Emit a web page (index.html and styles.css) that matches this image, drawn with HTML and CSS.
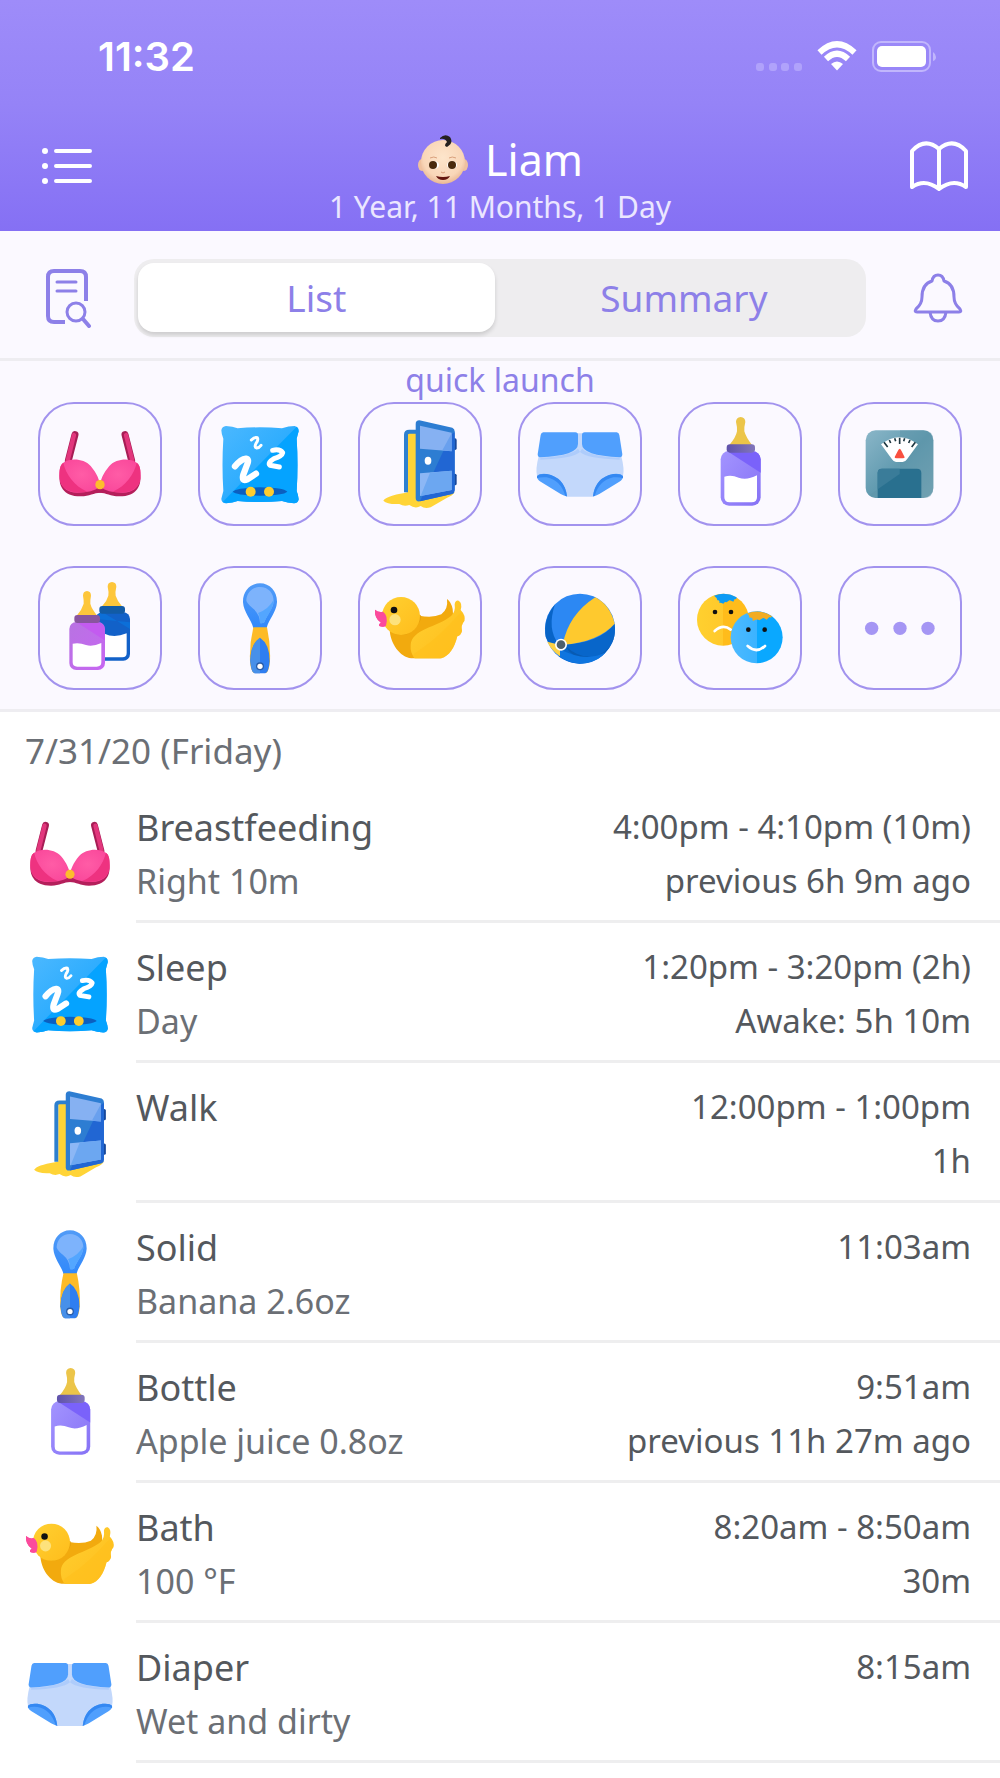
FILE: index.html
```html
<!DOCTYPE html>
<html lang="en">
<head>
<meta charset="utf-8">
<meta name="viewport" content="width=device-width, initial-scale=1">
<title>Liam – Baby Tracker</title>
<link rel="stylesheet" href="styles.css">
</head>
<body>
<svg class="sprite" aria-hidden="true">
  <defs>
    <linearGradient id="g-pillow" x1="0" y1="0" x2="1" y2="1"><stop offset="0" stop-color="#4bb8ff"/><stop offset="1" stop-color="#12a2fd"/></linearGradient>
    <radialGradient id="g-cup" cx=".55" cy=".45" r=".6"><stop offset="0" stop-color="#ff5ca6"/><stop offset="1" stop-color="#f9479a"/></radialGradient>
    <linearGradient id="g-bottle" x1="0" y1="0" x2="1" y2="1"><stop offset="0" stop-color="#a394ff"/><stop offset="1" stop-color="#8672f5"/></linearGradient>
    <linearGradient id="g-bottle2" x1="0" y1="0" x2="1" y2="1"><stop offset="0" stop-color="#b873e2"/><stop offset="1" stop-color="#c766f2"/></linearGradient>
    <linearGradient id="g-cap" x1="0" y1="0" x2="1" y2="0"><stop offset="0" stop-color="#5f52ab"/><stop offset="1" stop-color="#8276bb"/></linearGradient>
    <linearGradient id="g-scale" x1="0" y1="0" x2="1" y2="1"><stop offset="0" stop-color="#8ab6c8"/><stop offset=".5" stop-color="#629bb0"/><stop offset="1" stop-color="#84adbb"/></linearGradient>
    <linearGradient id="g-spoon" x1="0" y1="0" x2="0" y2="1"><stop offset="0" stop-color="#519bf7"/><stop offset="1" stop-color="#3189fb"/></linearGradient>
    <linearGradient id="g-duck" x1="0" y1="0" x2="1" y2="1"><stop offset="0" stop-color="#ffd031"/><stop offset="1" stop-color="#ffbd1c"/></linearGradient>
    <linearGradient id="g-sad" x1="0" y1="0" x2="1" y2="0"><stop offset="0" stop-color="#ffd02f"/><stop offset=".5" stop-color="#ffc92b"/><stop offset=".5" stop-color="#ffbc1b"/></linearGradient>
    <linearGradient id="g-happy" x1="0" y1="0" x2="1" y2="0"><stop offset="0" stop-color="#4dbaff"/><stop offset=".5" stop-color="#3bb3ff"/><stop offset=".5" stop-color="#0aa8ff"/></linearGradient>
    <radialGradient id="g-skin" cx=".5" cy=".4" r=".6"><stop offset="0" stop-color="#fde5cb"/><stop offset=".75" stop-color="#f9d6b8"/><stop offset="1" stop-color="#e9b794"/></radialGradient>
  </defs>

  <symbol id="i-bra" viewBox="100 68 276 276" overflow="visible">
    <g id="bra-half">
      <path d="M163 118 143 196" stroke="#a71d55" stroke-width="21" stroke-linecap="round"/>
      <path d="M160 119 141 196" stroke="#e2367c" stroke-width="13" stroke-linecap="round"/>
      <path d="M118 235C112 268 126 303 180 303C208 303 218 292 240 292V262Z" fill="#b41f5b"/>
      <path d="M128 202C150 187 190 190 210 212C228 233 238 256 238 272C224 288 200 291 170 292C140 292 120 275 117 250C115 225 118 208 128 202Z" fill="url(#g-cup)"/>
      <path d="M128 202C135 235 160 272 200 289C150 298 120 280 117 250C115 225 118 208 128 202Z" fill="#ee3280"/>
    </g>
    <use href="#bra-half" transform="matrix(-1 0 0 1 476 0)"/>
    <circle cx="238" cy="268" r="14" fill="#fdbd2c"/>
  </symbol>

  <symbol id="i-pillow" viewBox="584 68 276 276" overflow="visible">
    <path id="pillow-shape" d="M620 92Q640 93 655 99Q722 93 788 99Q808 92 826 92Q838 95 838 108Q834 122 832 130Q837 208 832 287Q837 300 838 312Q836 324 824 324Q805 323 788 317Q722 323 655 317Q640 323 620 324Q606 322 606 310Q610 295 612 287Q607 208 612 130Q606 115 606 105Q608 93 620 92Z" fill="url(#g-pillow)"/>
    <path d="M832 94Q838 98 838 108Q834 122 832 130Q837 208 832 287Q837 300 838 312Q836 324 824 324Q805 323 788 317Q722 323 655 317Q640 323 620 324L610 320Z" fill="#05a3ff"/>
    <g fill="none" stroke="#fff" stroke-linecap="round" stroke-linejoin="round">
      <path d="M647 213Q664 192 680 190Q690 192 684 206L672 238Q666 260 684 252L710 235" stroke-width="19"/>
      <path d="M760 165Q782 160 790 172Q788 182 764 190Q744 202 752 210L780 215" stroke-width="15"/>
      <path d="M696 134Q706 124 714 127Q718 134 710 144Q704 156 712 158Q720 157 725 150" stroke-width="9"/>
    </g>
    <path d="M640 289Q652 277 722 276Q792 277 804 289Q792 300 722 301Q652 300 640 289Z" fill="#0b5fc0"/>
    <circle cx="694" cy="289" r="15" fill="#fdcd2f"/><circle cx="749" cy="289" r="15" fill="#fdcd2f"/>
  </symbol>

  <symbol id="i-door" viewBox="100 68 276 276" overflow="visible">
    <path d="M128 316Q136 302 192 293L202 290V112H228V290L342 290Q338 300 318 308L270 336Q252 342 240 332Q224 342 206 329Q190 335 176 326Q140 328 128 316Z" fill="#ffd437"/>
    <path d="M196 291V118Q196 109 206 109H230" fill="none" stroke="#2e80cf" stroke-width="12"/>
    <rect x="332" y="129" width="16" height="35" rx="5" fill="#17489b"/><rect x="332" y="235" width="16" height="35" rx="5" fill="#17489b"/>
    <path d="M236 75 335 97Q342 100 342 108V284Q342 293 334 296L238 318Q225 320 225 308V86Q225 75 236 75Z" fill="#2d7dd2"/>
    <path d="M342 110V284Q342 293 334 296L238 318 330 120Z" fill="#2166d3"/>
    <path d="M238 91 333 112V168L238 160Z" fill="#86b1f2"/><path d="M333 114V168L305 165Z" fill="#69a0ee"/>
    <path d="M238 234 333 226V284L238 302Z" fill="#8cb7f5"/><path d="M268 232 333 226V284L240 302Z" fill="#6ca7f1"/>
    <ellipse cx="262" cy="196" rx="10" ry="12" fill="#fff"/>
  </symbol>

  <symbol id="i-diaper" viewBox="584 68 276 276" overflow="visible">
    <path d="M606 114 598 183Q588 222 593 241Q600 254 682 304H763Q845 254 851 241Q856 222 846 183L838 114Z" fill="#c3d8fb"/>
    <g id="diaper-side">
      <path d="M603 187Q690 184 716 160L722 170Q700 190 603 193Z" fill="#aeccfb"/>
      <path d="M612 111H708Q716 111 716 119V146Q716 181 601 186Q594 184 595 177L604 119Q606 111 612 111Z" fill="#509ffd"/>
      <path d="M593 242Q600 234 622 236Q676 246 683 303Q674 302 664 296L604 259Q592 252 593 242Z" fill="#509ffd"/>
      <path d="M593 243Q600 234 622 236Q676 246 683 303L678 302Q664 254 622 246Q604 244 593 249Z" fill="#3488f2"/>
    </g>
    <use href="#diaper-side" transform="matrix(-1 0 0 1 1444 0)"/>
  </symbol>

  <symbol id="i-bottle" viewBox="100 68 276 276" overflow="visible">
    <path d="M240 65Q254 66 254 80Q250 95 251 108Q256 126 274 149H206Q226 126 229 108Q230 95 226 80Q226 66 240 65Z" fill="#ecc549"/>
    <rect x="180" y="167" width="120" height="164" rx="25" fill="url(#g-bottle)"/>
    <path d="M205 171 300 232V192Q298 170 275 167H205Z" fill="#7a62fa"/>
    <rect x="198" y="147" width="85" height="25" rx="10" fill="url(#g-cap)"/>
    <path d="M191 244Q212 237 234 247Q258 256 289 240V306Q289 321 273 321H207Q191 321 191 306Z" fill="#fff"/>
  </symbol>

  <symbol id="i-scale" viewBox="584 68 276 276" overflow="visible">
    <rect x="619" y="105" width="203" height="203" rx="30" fill="url(#g-scale)"/>
    <path d="M722 105H792Q822 105 822 135V278Q822 308 792 308H649Q636 306 629 300L722 235Z" fill="#5c93a7" opacity=".45"/>
    <path d="M655 308V233Q655 220 668 220H773Q786 220 786 233V308Z" fill="#29708f"/>
    <path d="M655 282V233Q655 220 668 220H721V236Z" fill="#3a7c99"/>
    <path d="M665 147Q720 104 776 147L743 192Q738 200 730 200H710Q703 200 698 192Z" fill="#fff"/>
    <path d="M721 127V146M706 129 709 138M736 129 733 138M690 134 694 143M752 134 748 143M674 141 685 155M768 141 757 155" stroke="#1d3640" stroke-width="5"/>
    <path d="M721 160Q724 160 727 168L736 186Q736 189 730 189H712Q705 189 706 185L715 168Q718 160 721 160Z" fill="#f9503f"/>
  </symbol>

  <symbol id="i-bottles" viewBox="100 559 276 276" overflow="visible">
    <path d="M274 559Q287 560 287 573Q283 590 285 600Q290 616 304 632H244Q259 616 263 600Q265 590 261 573Q261 560 274 559Z" fill="#fdc63b"/>
    <rect x="226" y="650" width="102" height="145" rx="20" fill="#1261c8"/>
    <path d="M226 670V660Q236 650 246 650L328 700V680Z" fill="#0c6fd8"/>
    <rect x="236" y="631" width="77" height="23" rx="9" fill="#125ba5"/>
    <path d="M252 714Q280 728 318 713V772Q318 785 305 785H252Z" fill="#fff"/>
    <path d="M199 586Q211 587 211 600Q208 616 209 624Q213 640 230 660H168Q184 642 189 624Q190 616 187 600Q187 587 199 586Z" fill="#fdc63b"/>
    <rect x="146" y="679" width="107" height="144" rx="21" fill="url(#g-bottle2)"/>
    <path d="M168 680H232Q252 682 252 702V734Z" fill="#c35bf0"/>
    <rect x="161" y="658" width="77" height="24" rx="9" fill="#89559f"/>
    <path d="M156 744Q176 740 196 748Q216 754 242 742V800Q242 813 228 813H170Q156 813 156 800Z" fill="#fff"/>
  </symbol>

  <symbol id="i-spoon" viewBox="584 559 276 276" overflow="visible">
    <path d="M722 563C752 563 774 588 773 620C771 650 748 672 742 697H702C696 672 673 650 671 620C670 588 692 563 722 563Z" fill="url(#g-spoon)"/>
    <path d="M722 574C748 574 764 594 763 618C760 642 742 658 735 680Q728 684 722 682Q722 656 700 638C686 626 681 618 681 614C682 592 698 574 722 574Z" fill="#7db3fc"/>
    <path d="M763 612C762 642 742 658 735 680Q728 684 722 682Q722 662 716 652Q748 640 763 612Z" fill="#53a6ff"/>
    <path d="M702 695H743Q754 745 752 796Q749 828 740 832H704Q694 826 692 796Q690 745 702 695Z" fill="#fdbb27"/>
    <path d="M722 726Q751 745 751 796Q748 832 738 833H706Q696 832 693 796Q694 745 722 726Z" fill="#2f7ef0"/>
    <path d="M722 726V833H706Q696 832 693 796Q694 745 722 726Z" fill="#4790e9"/>
    <circle cx="722" cy="812" r="12" fill="#2a5da8"/><circle cx="722" cy="812" r="8" fill="#fff"/>
  </symbol>

  <symbol id="i-duck" viewBox="100 559 276 276" overflow="visible">
    <path d="M147 700C148 744 178 784 212 788H300L340 700 336 640Q332 620 319 610Q323 640 302 656Q275 668 236 660L220 690Z" fill="#f2aa0e"/>
    <path d="M210 748C212 700 290 695 332 660Q345 648 342 626Q344 613 354 615Q366 622 360 643Q376 660 371 676Q360 688 364 706Q360 720 350 722C342 756 325 782 302 788H222Q208 772 210 748Z" fill="url(#g-duck)"/>
    <path d="M350 660Q300 720 232 766Q216 776 216 782L222 788H302C325 782 342 756 350 722Q360 720 364 706Q360 688 371 676Q372 664 362 650Z" fill="#ffbf1c" opacity=".6"/>
    <path d="M149 708Q205 740 240 672V658L180 650Z" fill="#e49e0b"/>
    <path d="M103 642Q114 652 127 648Q144 660 136 690Q128 696 116 691Q113 685 121 681Q101 668 103 642Z" fill="#fb4a9c"/>
    <circle cx="181" cy="661" r="57" fill="url(#g-duck)"/>
    <path d="M103 642Q114 652 127 648Q144 660 136 690Q128 696 116 691Q113 685 121 681Q101 668 103 642Z" fill="#fb4a9c"/>
    <circle cx="163" cy="672" r="17" fill="#fde27c"/>
    <circle cx="160" cy="643" r="10" fill="#111"/>
  </symbol>

  <symbol id="i-ball" viewBox="584 559 276 276" overflow="visible">
    <circle cx="722" cy="699" r="105" fill="#2c88f3"/>
    <path d="M647 626Q610 672 619 724L628 742 658 746Q622 700 647 626Z" fill="#0864c7"/>
    <path d="M826 684Q780 742 672 747L658 782Q720 826 786 782Q834 742 826 684Z" fill="#0866ca"/>
    <path d="M680 752Q724 796 788 780Q828 744 826 700Q830 770 740 792Q690 780 680 752Z" fill="#085bb3"/>
    <path d="M660 782Q690 806 740 803Q780 796 798 770Q740 802 660 760Z" fill="#0f75df"/>
    <path d="M768 605Q812 628 826 684Q776 740 670 747Q688 656 768 605Z" fill="#fec92e"/>
    <path d="M624 738 662 748V782Q634 762 624 738Z" fill="#fdd145"/>
    <circle cx="665" cy="747" r="18" fill="#fff"/><circle cx="665" cy="747" r="13" fill="#4e5f6c"/>
  </symbol>

  <symbol id="i-moods" viewBox="100 559 276 276" overflow="visible">
    <circle cx="187" cy="672" r="78" fill="url(#g-sad)"/>
    <path d="M160 600Q195 587 228 605Q228 612 222 610L218 618Q208 612 206 614L198 620Q192 616 188 624Q178 620 176 622Q178 612 170 614Q170 606 160 600Z" fill="#0d9bf5"/>
    <circle cx="163" cy="649" r="7" fill="#111"/><circle cx="211" cy="649" r="7" fill="#111"/>
    <path d="M162 706Q187 684 210 702" fill="none" stroke="#fff" stroke-width="8" stroke-linecap="round"/>
    <circle cx="288" cy="725" r="78" fill="url(#g-happy)"/>
    <path d="M258 654Q296 638 334 662Q330 668 326 664L318 672Q308 664 306 668L296 674Q290 668 276 676Q278 664 266 666Q266 656 258 654Z" fill="#f2ac22"/>
    <circle cx="263" cy="702" r="7" fill="#111"/><circle cx="312" cy="702" r="7" fill="#111"/>
    <path d="M261 751Q288 775 313 751" fill="none" stroke="#fff" stroke-width="8" stroke-linecap="round"/>
  </symbol>

  <symbol id="i-more" viewBox="584 559 276 276" overflow="visible">
    <g fill="#a596f4"><circle cx="637" cy="698" r="20"/><circle cx="722" cy="698" r="20"/><circle cx="806" cy="698" r="20"/></g>
  </symbol>
</svg>

<header class="header">
  <div class="status">
    <time class="clock">11:32</time>
    <div class="status-icons">
      <svg width="46" height="32" viewBox="0 0 46 32" fill="#b0a2fb" aria-hidden="true"><rect x="0" y="22" width="8" height="8" rx="3"/><rect x="13" y="22" width="8" height="8" rx="3"/><rect x="25" y="22" width="8" height="8" rx="3"/><rect x="38" y="22" width="8" height="8" rx="3"/></svg>
      <svg width="40" height="32" viewBox="0 0 40 32" fill="none" stroke="#fff" aria-hidden="true"><path d="M2.500 11.500Q20-5 37.500 11.500" stroke-width="6"/><path d="M9 18Q20 7.500 31 18" stroke-width="6"/><path d="M14 23Q20 18 26 23L20 29.500Z" fill="#fff" stroke="none"/></svg>
      <svg width="64" height="32" viewBox="0 0 64 32" aria-hidden="true"><rect x="1" y="1" width="57" height="29" rx="8" fill="none" stroke="#c1b6fc" stroke-width="2"/><rect x="5" y="5" width="49" height="21" rx="5" fill="#fff"/><path d="M61 11Q64 13 64 16T61 20Z" fill="#c1b6fc"/></svg>
    </div>
  </div>
  <nav class="nav">
    <button class="icon-button icon-button-start" type="button" aria-label="Menu">
      <svg width="50" height="38" viewBox="0 0 50 38" fill="none" stroke="#fff" stroke-width="4" stroke-linecap="round"><path d="M14 4H48M14 19H48M14 34H48"/><g fill="#fff" stroke="none"><circle cx="3" cy="4" r="3"/><circle cx="3" cy="19" r="3"/><circle cx="3" cy="34" r="3"/></g></svg>
    </button>
    <div class="child">
      <h1 class="child-name">
        <svg width="52" height="52" viewBox="0 0 52 52" role="img" aria-label="Baby"><ellipse cx="5" cy="31" rx="4" ry="6" fill="#efc19f"/><ellipse cx="47" cy="31" rx="4" ry="6" fill="#efc19f"/><circle cx="26" cy="28" r="22" fill="url(#g-skin)"/><path d="M23 4Q28-1 33 3Q37 9 30 13Q26 12 30 8Q28 4 23 5Z" fill="#24201f"/><g fill="#fff"><ellipse cx="17" cy="31" rx="5" ry="4"/><ellipse cx="35" cy="31" rx="5" ry="4"/></g><g fill="#4a2a0d"><circle cx="16" cy="31" r="4"/><circle cx="35" cy="31" r="4"/></g><path d="M13 24Q17 22 20 24M32 24Q35 22 39 24M24 38Q26 40 28 38" fill="none" stroke="#d9a07c"/><path d="M19 42Q26 44 33 42Q31 46 26 46T19 42Z" fill="#64160f"/></svg>
        Liam
      </h1>
      <p class="child-age">1 Year, 11 Months, 1 Day</p>
    </div>
    <button class="icon-button icon-button-end" type="button" aria-label="Journal">
      <svg width="60" height="52" viewBox="0 0 60 52" fill="none" stroke="#fff" stroke-width="4" stroke-linejoin="round" stroke-linecap="round"><path d="M30 49Q16 38 3 47V11Q16-3 30 9Q44-3 57 11V47Q44 38 30 49V9"/></svg>
    </button>
  </nav>
</header>

<main>
  <div class="toolbar">
    <button class="tool" type="button" aria-label="Search records">
      <svg width="48" height="60" viewBox="0 0 48 60" fill="none" stroke="#8d80e8" stroke-width="4" stroke-linecap="round"><path d="M42 33V9Q42 3 36 3H10Q4 3 4 9V48Q4 54 10 54H21" stroke-linecap="butt"/><path d="M13 14H32M13 23H32" stroke-width="3"/><circle cx="32" cy="44" r="9" stroke-width="3"/><path d="M39 51 45 58"/></svg>
    </button>
    <div class="segmented">
      <button class="segment segment-active" type="button" aria-pressed="true">List</button>
      <button class="segment" type="button" aria-pressed="false">Summary</button>
    </div>
    <button class="tool" type="button" aria-label="Reminders">
      <svg width="56" height="50" viewBox="0 0 56 50" fill="none" stroke="#8d80e8" stroke-width="3" stroke-linejoin="round"><path d="M24 8Q25 2 30 2T36 8Q46 11 46 24Q46 31 52 36Q54 39 51 39H9Q6 39 8 36Q14 31 14 24Q14 11 24 8Z"/><path d="M22 39Q23 48 30 48T38 39"/></svg>
    </button>
  </div>

  <section class="quick">
    <h2 class="quick-title">quick launch</h2>
    <div class="tiles">
      <button class="tile" type="button" aria-label="Breastfeeding"><svg class="pic"><use href="#i-bra"/></svg></button>
      <button class="tile" type="button" aria-label="Sleep"><svg class="pic"><use href="#i-pillow"/></svg></button>
      <button class="tile" type="button" aria-label="Walk"><svg class="pic"><use href="#i-door"/></svg></button>
      <button class="tile" type="button" aria-label="Diaper"><svg class="pic"><use href="#i-diaper"/></svg></button>
      <button class="tile" type="button" aria-label="Bottle"><svg class="pic"><use href="#i-bottle"/></svg></button>
      <button class="tile" type="button" aria-label="Growth"><svg class="pic"><use href="#i-scale"/></svg></button>
      <button class="tile" type="button" aria-label="Pumping"><svg class="pic"><use href="#i-bottles"/></svg></button>
      <button class="tile" type="button" aria-label="Solid"><svg class="pic"><use href="#i-spoon"/></svg></button>
      <button class="tile" type="button" aria-label="Bath"><svg class="pic"><use href="#i-duck"/></svg></button>
      <button class="tile" type="button" aria-label="Play"><svg class="pic"><use href="#i-ball"/></svg></button>
      <button class="tile" type="button" aria-label="Mood"><svg class="pic"><use href="#i-moods"/></svg></button>
      <button class="tile" type="button" aria-label="More"><svg class="pic"><use href="#i-more"/></svg></button>
    </div>
  </section>

  <section class="log">
    <h2 class="log-date">7/31/20 (Friday)</h2>
    <ul class="entries">
      <li class="entry"><svg class="pic entry-pic"><use href="#i-bra"/></svg>
        <div class="entry-body"><div class="entry-main"><h3 class="entry-title">Breastfeeding</h3><p class="entry-note">Right 10m</p></div><div class="entry-time"><p>4:00pm - 4:10pm (10m)</p><p>previous 6h 9m ago</p></div></div></li>
      <li class="entry"><svg class="pic entry-pic"><use href="#i-pillow"/></svg>
        <div class="entry-body"><div class="entry-main"><h3 class="entry-title">Sleep</h3><p class="entry-note">Day</p></div><div class="entry-time"><p>1:20pm - 3:20pm (2h)</p><p>Awake: 5h 10m</p></div></div></li>
      <li class="entry"><svg class="pic entry-pic"><use href="#i-door"/></svg>
        <div class="entry-body"><div class="entry-main"><h3 class="entry-title">Walk</h3></div><div class="entry-time"><p>12:00pm - 1:00pm</p><p>1h</p></div></div></li>
      <li class="entry"><svg class="pic entry-pic"><use href="#i-spoon"/></svg>
        <div class="entry-body"><div class="entry-main"><h3 class="entry-title">Solid</h3><p class="entry-note">Banana 2.6oz</p></div><div class="entry-time"><p>11:03am</p></div></div></li>
      <li class="entry"><svg class="pic entry-pic"><use href="#i-bottle"/></svg>
        <div class="entry-body"><div class="entry-main"><h3 class="entry-title">Bottle</h3><p class="entry-note">Apple juice 0.8oz</p></div><div class="entry-time"><p>9:51am</p><p>previous 11h 27m ago</p></div></div></li>
      <li class="entry"><svg class="pic entry-pic"><use href="#i-duck"/></svg>
        <div class="entry-body"><div class="entry-main"><h3 class="entry-title">Bath</h3><p class="entry-note">100 °F</p></div><div class="entry-time"><p>8:20am - 8:50am</p><p>30m</p></div></div></li>
      <li class="entry"><svg class="pic entry-pic"><use href="#i-diaper"/></svg>
        <div class="entry-body"><div class="entry-main"><h3 class="entry-title">Diaper</h3><p class="entry-note">Wet and dirty</p></div><div class="entry-time"><p>8:15am</p></div></div></li>
    </ul>
  </section>
</main>
</body>
</html>
```
FILE: styles.css
```css
* {
  box-sizing: border-box;
}

body {
  margin: 0;
  background: #fff;
  color: #54585d;
  font-family: "Noto Sans", "Open Sans", sans-serif;
}

h1, h2, h3, p, ul {
  margin: 0;
  padding: 0;
  font-weight: 400;
  list-style: none;
}

button {
  padding: 0;
  border: 0;
  background: none;
  color: inherit;
  font: inherit;
  cursor: pointer;
}

svg {
  display: block;
  flex: none;
}

.sprite {
  position: absolute;
  width: 0;
  height: 0;
}

/* Header */
.header {
  padding-bottom: 4px;
  background: linear-gradient(#9e8cf9, #9583f7 45%, #8570f4);
  color: #fff;
}

.status {
  display: flex;
  align-items: center;
  justify-content: space-between;
  height: 113px;
  padding: 0 64px 0 98px;
}

.clock {
  font-family: Inter, sans-serif;
  font-size: 40px;
  font-weight: 600;
}

.status-icons {
  display: flex;
  gap: 15px;
}

.nav {
  display: grid;
  grid-template-columns: 1fr auto 1fr;
  align-items: start;
  padding: 20px 31px 0;
}

.icon-button {
  display: flex;
  align-items: center;
  height: 66px;
}

.icon-button-start {
  justify-self: start;
  padding-left: 11px;
}

.icon-button-end {
  justify-self: end;
}

.child {
  text-align: center;
}

.child-name {
  display: flex;
  align-items: center;
  justify-content: center;
  gap: 16px;
  font-size: 43px;
  line-height: 54px;
}

.child-age {
  color: #ebe6ff;
  font-size: 30px;
  line-height: 40px;
}

/* View switch */
.toolbar {
  display: flex;
  align-items: center;
  gap: 42px;
  height: 130px;
  padding: 7px 36px 0 44px;
  border-bottom: 3px solid #eeedf1;
  background: #fbf9ff;
}

.segmented {
  display: flex;
  flex: 1;
  gap: 7px;
  height: 78px;
  padding: 4px 0 5px 4px;
  border-radius: 20px;
  background: #eeedef;
}

.segment {
  flex: 1;
  border-radius: 16px;
  color: #8d80e8;
  font-size: 37px;
}

.segment-active {
  flex: 0 0 49%;
  background: #fff;
  box-shadow: 0 3px 4px rgba(0, 0, 0, .14);
}

/* Quick launch */
.quick {
  padding: 0 38px 19px;
  border-bottom: 3px solid #eeedf1;
  background: #fbf9ff;
}

.quick-title {
  margin-bottom: 3px;
  color: #8d80e8;
  font-size: 32px;
  line-height: 38px;
  text-align: center;
}

.tiles {
  display: grid;
  grid-template-columns: repeat(6, 124px);
  justify-content: space-between;
  row-gap: 40px;
}

.tile {
  display: flex;
  align-items: center;
  justify-content: center;
  height: 124px;
  border: 2px solid #a293ee;
  border-radius: 36px;
}

.pic {
  width: 92px;
  height: 92px;
  overflow: visible;
}

/* Log */
.log-date {
  padding: 7px 25px 0;
  color: #6b6f75;
  font-size: 35px;
  line-height: 64px;
}

.entry {
  display: grid;
  grid-template-columns: 90px 1fr;
  column-gap: 21px;
  align-items: center;
  padding-left: 25px;
}

.entry-pic {
  width: 90px;
  height: 90px;
  margin-top: 2px;
}

.entry-body {
  display: flex;
  justify-content: space-between;
  min-height: 140px;
  padding: 18px 29px 13px 0;
  border-bottom: 3px solid #eeeeef;
}

.entry-title {
  font-size: 36px;
  line-height: 54px;
}

.entry-note {
  color: #6b6f75;
  font-size: 34px;
  line-height: 52px;
}

.entry-time {
  display: flex;
  flex-direction: column;
  gap: 2px;
  font-size: 33px;
  line-height: 52px;
  text-align: right;
}
```
